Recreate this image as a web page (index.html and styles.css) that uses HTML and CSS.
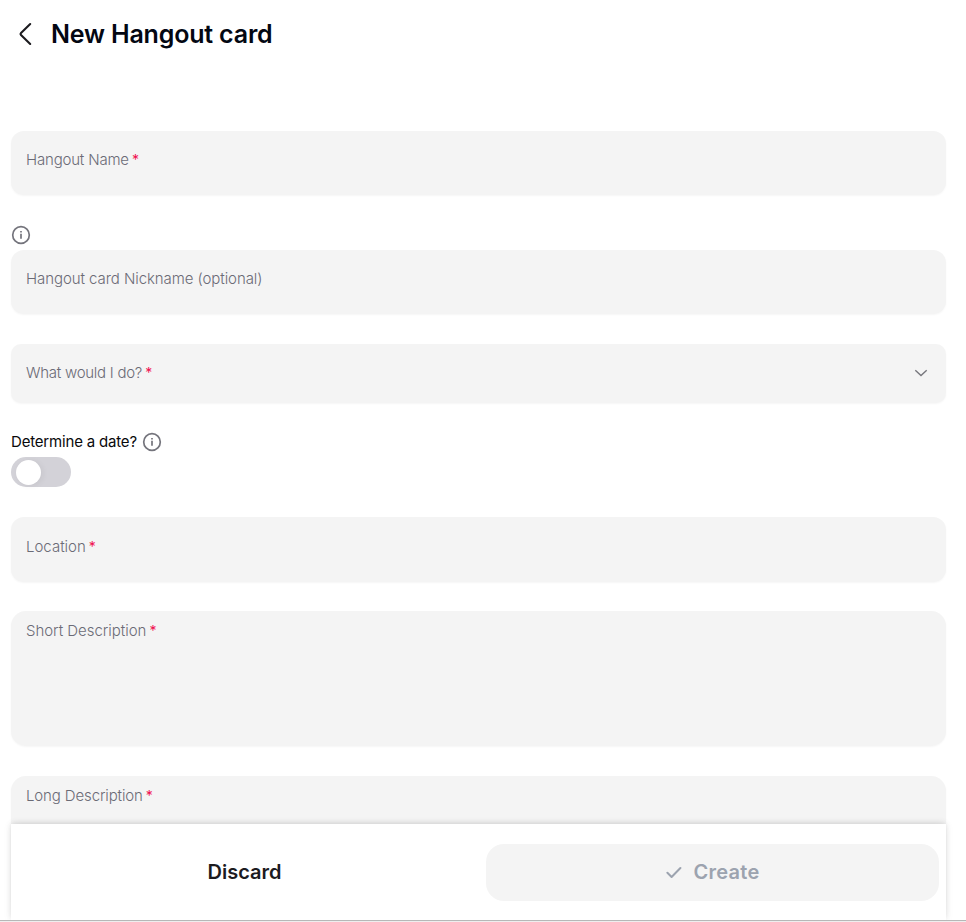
FILE: index.html
```html
<!DOCTYPE html>
<html lang="en">
<head>
<meta charset="utf-8">
<title>New Hangout card</title>
<link rel="stylesheet" href="styles.css">
</head>
<body>
<div class="page">
  <header class="header">
    <svg class="back" width="16" height="24" viewBox="0 0 16 24" fill="none" stroke="#1c1b1f" stroke-width="2.1" stroke-linecap="round" stroke-linejoin="round"><path d="M12.2 2 3 11q-1 1 0 2l9.2 9"/></svg>
    <h1 class="title">New Hangout card</h1>
  </header>
  <main class="form">
    <div class="field"><span class="label name">Hangout Name</span><span class="req">*</span></div>
    <svg class="info lone" width="20" height="20" viewBox="0 0 20 20" fill="none" stroke="#74747c"><circle cx="10" cy="10" r="8.3" stroke-width="1.7"/><path d="M10 8.7v5M10 6v1.4" stroke-width="1.7"/></svg>
    <div class="field"><span class="label nickname">Hangout card Nickname (optional)</span></div>
    <div class="field select"><span class="label activity">What would I do?</span><span class="req">*</span>
      <svg class="chevron" width="14" height="8" viewBox="0 0 14 8" fill="none" stroke="#77777d" stroke-width="1.4"><path d="m1.3 1.2 5.7 5.4 5.7-5.4"/></svg>
    </div>
    <div class="question"><span class="question-text">Determine a date?</span>
      <svg class="info" width="20" height="20" viewBox="0 0 20 20" fill="none" stroke="#74747c"><circle cx="10" cy="10" r="8.3" stroke-width="1.7"/><path d="M10 8.7v5M10 6v1.4" stroke-width="1.7"/></svg>
    </div>
    <div class="toggle"><div class="knob"></div></div>
    <div class="field location"><span class="label place">Location</span><span class="req">*</span></div>
    <div class="field area"><span class="label short">Short Description</span><span class="req">*</span></div>
    <div class="field area"><span class="label long">Long Description</span><span class="req">*</span></div>
  </main>
  <footer class="actions">
    <button class="btn discard">Discard</button>
    <button class="btn create"><svg width="16" height="13" viewBox="0 0 16 13" fill="none" stroke="#9ca3af" stroke-width="2" stroke-linecap="round" stroke-linejoin="round"><path d="m1.4 6.8 4.2 4.2L14.4 2"/></svg><span>Create</span></button>
  </footer>
  <div class="edge"></div>
</div>
</body>
</html>
```
FILE: styles.css
```css
* { box-sizing: border-box; }
body { margin: 0; background: #fff; font-family: Inter, "Liberation Sans", sans-serif; }
.page { position: relative; height: 922px; overflow: hidden; }
.header { display: flex; align-items: center; gap: 17px; height: 68px; padding-left: 18px; }
.title { margin: 0; font-size: 25px; font-weight: 600; letter-spacing: -.18px; color: #030712; white-space: nowrap; }
.form { display: flex; flex-direction: column; padding: 63px 20px 0 11px; }
.field { display: flex; align-items: flex-start; flex: none; height: 64px; padding: 19px 15px 0; margin-bottom: 30px; border-radius: 13px; background: #f4f4f4; box-shadow: 0 1px 2px rgba(0,0,0,.04); font-size: 15px; line-height: 20px; }
.label { font-weight: 300; color: #6b6b76; white-space: nowrap; }
.name { letter-spacing: -.18px; }
.nickname { letter-spacing: -.07px; }
.activity { letter-spacing: -.26px; }
.short { letter-spacing: -.03px; }
.long { letter-spacing: -.13px; }
.req { margin-left: 3px; color: #f00f50; font-size: 14px; line-height: 20px; }
.lone { margin-bottom: 5px; }
.select { height: 59px; border-radius: 10px; margin-bottom: 28px; }
.chevron { margin: 6px 3px 0 auto; }
.question { display: flex; align-items: center; gap: 5px; height: 21px; margin-bottom: 5px; }
.question-text { font-size: 15px; font-weight: 400; line-height: 20px; letter-spacing: -.18px; color: #09090b; white-space: nowrap; }
.toggle { width: 60px; height: 30px; padding: 3px 5px 0; margin-bottom: 30px; border-radius: 15px; background: #d3d2d8; }
.knob { width: 25px; height: 25px; border-radius: 50%; background: #fff; box-shadow: 2px 1px 6px rgba(0,0,0,.06); }
.location { height: 65px; padding-top: 20px; margin-bottom: 29px; }
.area { height: 135px; padding-top: 10px; border-radius: 15px; margin-bottom: 30px; }
.actions { position: absolute; left: 11px; right: 20px; top: 824px; height: 96px; display: grid; grid-template-columns: 467px 453px; gap: 8px; align-items: center; background: #fff; box-shadow: 0 -1px 6px -1px rgba(0,0,0,.16), 0 0 10px rgba(0,0,0,.05); }
.btn { height: 57px; border: 0; border-radius: 18px; padding: 0; font: 600 20px/24px Inter, "Liberation Sans", sans-serif; background: none; color: #1c1b1f; }
.create { display: flex; align-items: center; justify-content: center; gap: 12px; letter-spacing: .25px; background: #f4f4f4; color: #9ca3af; }
.edge { position: absolute; left: 0; right: 0; top: 920px; height: 2px; background: #eee; border-top: 1px solid #b7b7b7; }
```
